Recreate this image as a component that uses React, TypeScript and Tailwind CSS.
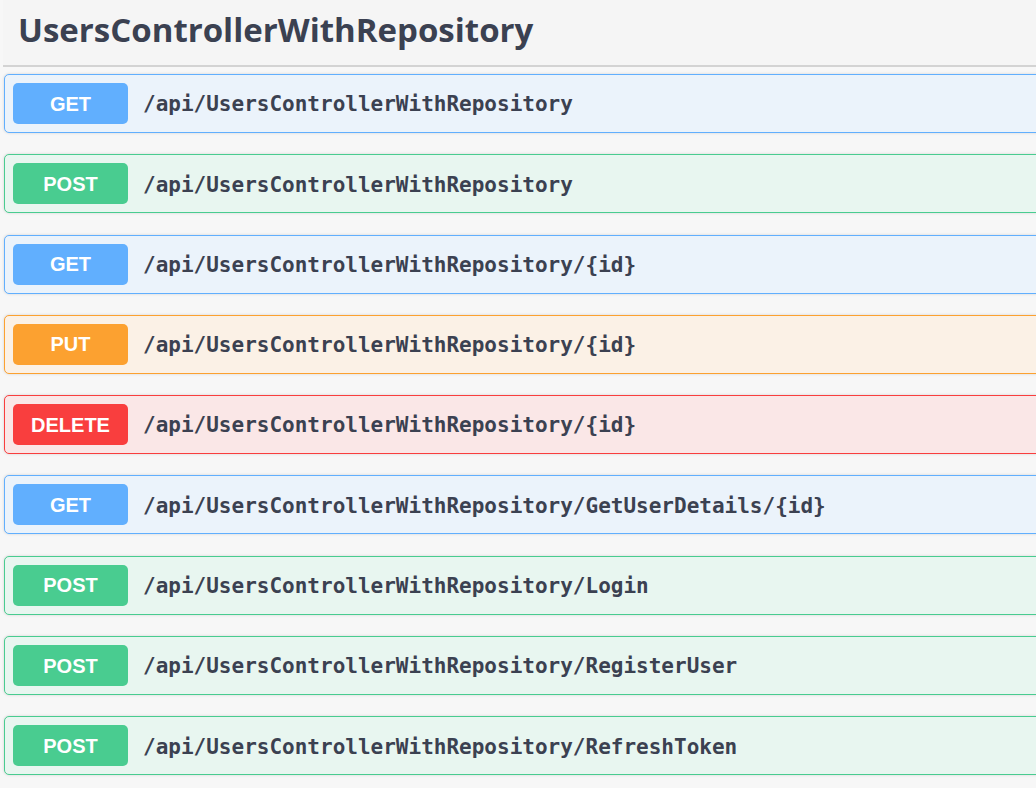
const endpoints = [
  { method: 'GET', path: '/api/UsersControllerWithRepository' },
  { method: 'POST', path: '/api/UsersControllerWithRepository' },
  { method: 'GET', path: '/api/UsersControllerWithRepository/{id}' },
  { method: 'PUT', path: '/api/UsersControllerWithRepository/{id}' },
  { method: 'DELETE', path: '/api/UsersControllerWithRepository/{id}' },
  { method: 'GET', path: '/api/UsersControllerWithRepository/GetUserDetails/{id}' },
  { method: 'POST', path: '/api/UsersControllerWithRepository/Login' },
  { method: 'POST', path: '/api/UsersControllerWithRepository/RegisterUser' },
  { method: 'POST', path: '/api/UsersControllerWithRepository/RefreshToken' },
]

const styles: Record<string, { row: string; badge: string }> = {
  GET: { row: 'bg-[#ebf3fb] border-[#61affe]', badge: 'bg-[#61affe]' },
  POST: { row: 'bg-[#e8f6f0] border-[#49cc90]', badge: 'bg-[#49cc90]' },
  PUT: { row: 'bg-[#fbf1e6] border-[#fca130]', badge: 'bg-[#fca130]' },
  DELETE: { row: 'bg-[#fae7e7] border-[#f93e3e]', badge: 'bg-[#f93e3e]' },
}

export default function App() {
  return (
    <div className="w-[1036px] h-[788px] overflow-hidden bg-[#f7f7f7] text-[#3b4151]">
      {/* Tag header */}
      <div className="ml-[3px] h-[67px] border-b-2 border-[#d3d3d3] bg-[#f5f5f5] pl-[15px] flex items-center">
        <h2 className="font-['Open_Sans',sans-serif] text-[33px] font-bold pb-[6px]">
          UsersControllerWithRepository
        </h2>
      </div>

      {/* Operations */}
      <div className="ml-[4px] w-[1040px] mt-[7px] flex flex-col gap-[21.3px]">
        {endpoints.map((op, i) => (
          <div
            key={i}
            className={`h-[59px] border rounded-[5px] shadow-[0_0_3px_rgba(0,0,0,0.15)] flex items-center pl-[8px] ${styles[op.method].row}`}
          >
            <span
              className={`w-[115px] h-[41px] rounded-[5px] flex items-center justify-center text-white font-bold text-[20px] font-['Liberation_Sans',Arial,sans-serif] ${styles[op.method].badge}`}
            >
              {op.method}
            </span>
            <span className="ml-[15px] pt-[3px] font-['DejaVu_Sans_Mono',monospace] font-bold text-[21px] text-[#3b4151]">
              {op.path}
            </span>
          </div>
        ))}
      </div>
    </div>
  )
}
